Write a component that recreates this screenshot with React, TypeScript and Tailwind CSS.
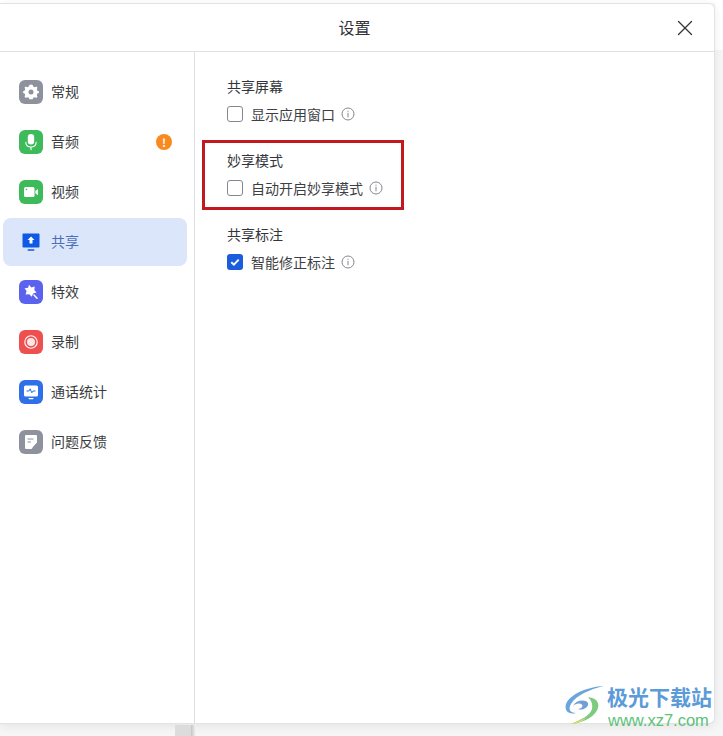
import { X } from "lucide-react"
import type { ReactNode } from "react"

function IconBox({ color, children }: { color: string; children: ReactNode }) {
  return (
    <div className={`w-6 h-6 rounded-md flex items-center justify-center shrink-0 ${color}`}>
      <svg className="w-6 h-6" viewBox="0 0 24 24" fill="none">
        {children}
      </svg>
    </div>
  )
}

const navItems: { label: string; color: string; icon: ReactNode; badge?: boolean; active?: boolean }[] = [
  {
    label: "常规",
    color: "bg-[#8e929c]",
    icon: (
      <>
        <path
          d="M12 5.500l1.600.4.5 1.500 1.500.6 1.400-.7 1.200 1.200-.7 1.400.6 1.500 1.400.6v1.600l-1.400.5-.6 1.500.7 1.400-1.200 1.200-1.400-.7-1.500.6-.5 1.400h-3.200l-.5-1.400-1.500-.6-1.400.7-1.200-1.200.7-1.400-.6-1.500-1.400-.5v-1.600l1.400-.6.6-1.500-.7-1.400 1.200-1.200 1.400.7 1.500-.6.5-1.500z"
          fill="#fff"
          transform="translate(12 12) scale(1.050) translate(-12 -12.600)"
        />
        <circle cx="12" cy="12" r="2.500" fill="#8e929c" />
      </>
    ),
  },
  {
    label: "音频",
    color: "bg-[#3dba5a]",
    badge: true,
    icon: (
      <>
        <rect x="8.800" y="4" width="6.400" height="10.500" rx="3.200" fill="#fff" />
        <path d="M6.800 12.200c.2 3 2.500 4.800 5.200 4.800s5-1.800 5.200-4.800M12 17v2.800" stroke="#fff" strokeWidth="1.100" strokeLinecap="round" />
      </>
    ),
  },
  {
    label: "视频",
    color: "bg-[#3dba5a]",
    icon: (
      <>
        <rect x="5" y="7" width="10.500" height="10" rx="1.500" fill="#fff" />
        <path d="M16.300 11l2.700-2v6.200l-2.700-2z" fill="#fff" />
        <circle cx="7.500" cy="9.500" r=".8" fill="#3dba5a" />
      </>
    ),
  },
  {
    label: "共享",
    color: "",
    active: true,
    icon: (
      <>
        <rect x="3.500" y="3.500" width="17" height="14" rx="1" fill="#0e5ae6" />
        <path d="M12 6.500l3.500 3.500h-2v3.500h-3V10h-2z" fill="#fff" />
        <rect x="8.500" y="19.200" width="7" height="1.500" rx=".7" fill="#0e5ae6" />
      </>
    ),
  },
  {
    label: "特效",
    color: "bg-[#5b62ee]",
    icon: (
      <>
        <path d="M10 4.800l2.300 2.700 3.500-1-.5 3.600 2.200 2.400-3.400 1-1.300 3.300-2.600-2.500-3.600.2 1-3.400-2-2.800 3.500-.5z" fill="#fff" />
        <path d="M15 15l3 3.200" stroke="#fff" strokeWidth="1.500" strokeLinecap="round" />
      </>
    ),
  },
  {
    label: "录制",
    color: "bg-[#ee5050]",
    icon: (
      <>
        <circle cx="12" cy="12" r="6.200" stroke="#fff" strokeWidth="1.100" />
        <circle cx="12" cy="12" r="4" fill="#fff" fillOpacity=".85" />
      </>
    ),
  },
  {
    label: "通话统计",
    color: "bg-[#2f6fe8]",
    icon: (
      <>
        <rect x="5" y="5.500" width="14" height="11" rx="1.500" fill="#fff" />
        <path d="M7.500 11h2.500l1.200-2.200 1.600 4 1.200-1.800h2.500" stroke="#2f6fe8" strokeWidth="1" strokeLinejoin="round" />
        <rect x="9.500" y="18" width="5" height="1.200" rx=".6" fill="#fff" />
      </>
    ),
  },
  {
    label: "问题反馈",
    color: "bg-[#8e929c]",
    icon: (
      <>
        <path d="M7 5h10a1 1 0 011 1v6.500L12.500 19H7a1 1 0 01-1-1V6a1 1 0 011-1z" fill="#fff" />
        <path d="M8.500 9h6M8.500 12h3.500" stroke="#8e929c" strokeWidth="1.200" />
        <path d="M14 17.500l5-5" stroke="#8e929c" strokeWidth="1" />
      </>
    ),
  },
]

function InfoIcon() {
  return (
    <svg className="w-[14px] h-[14px] shrink-0" viewBox="0 0 14 14" fill="none">
      <circle cx="7" cy="7" r="6" stroke="#85888f" strokeWidth="1" />
      <rect x="6.500" y="3.700" width="1" height="1.100" fill="#85888f" />
      <rect x="6.500" y="5.800" width="1" height="4.500" fill="#85888f" />
    </svg>
  )
}

function Option({ title, label, checked }: { title: string; label: string; checked?: boolean }) {
  return (
    <div className="flex flex-col gap-[7px]">
      <div className="h-5 leading-[18px] text-[14px] text-[#33353a]">{title}</div>
      <div className="flex items-center h-5">
        {checked ? (
          <div className="w-4 h-4 rounded-[3px] bg-[#1b5ddc] flex items-center justify-center">
            <svg className="w-3 h-3" viewBox="0 0 12 12" fill="none">
              <path d="M2.300 6.200l2.600 2.500 4.800-5" stroke="#fff" strokeWidth="1.900" />
            </svg>
          </div>
        ) : (
          <div className="w-4 h-4 rounded-[3px] border border-[#85878d] bg-white" />
        )}
        <span className="ml-2 text-[14px] text-[#3d3f45] leading-5 mb-[1px]">{label}</span>
        <span className="ml-[6px] flex">
          <InfoIcon />
        </span>
      </div>
    </div>
  )
}

export default function App() {
  return (
    <div
      className="relative w-[723px] h-[736px] overflow-hidden bg-[#f6f6f7] text-[#2e3035]"
      style={{ fontFamily: '"Noto Sans CJK SC", "Liberation Sans", sans-serif' }}
    >
      <div className="absolute right-0 top-0 w-2 h-[50px] bg-white" />
      <div className="h-[3px] bg-white" />
      {/* settings window */}
      <div className="relative w-[715px] h-[721px] bg-white rounded-br-md rounded-tr-md border-t border-r border-b border-[#e3e3e5] flex flex-col shadow-[0_2px_10px_rgba(0,0,0,0.08)]">
        <div className="relative h-12 shrink-0 flex items-center justify-center border-b border-[#dfdfe1]">
          <span className="text-[16px] ml-[-5px] mb-[1px] text-[#303236]">设置</span>
          <X className="absolute right-[16px] top-[11px] w-[26px] h-[26px] text-[#33353a]" strokeWidth={1.200} />
        </div>

        <div className="flex flex-1 min-h-0">
          {/* sidebar */}
          <div className="w-[195px] shrink-0 border-r border-[#dfdfe1] pt-4 pl-[3px] flex flex-col gap-[2px]">
            {navItems.map((item) => (
              <div
                key={item.label}
                className={`w-[184px] h-12 rounded-lg flex items-center pl-4 pr-[15px] gap-2 ${item.active ? "bg-[#dbe6fb]" : ""}`}
              >
                <IconBox color={item.color}>{item.icon}</IconBox>
                <span className={`text-[14px] leading-5 mb-[2px] ${item.active ? "text-[#4b6fb8]" : "text-[#3a3c41]"}`}>{item.label}</span>
                {item.badge && (
                  <span className="ml-auto w-4 h-4 rounded-full bg-[#f98a1f] text-white text-[11px] font-bold leading-4 text-center">
                    !
                  </span>
                )}
              </div>
            ))}
          </div>

          {/* content */}
          <div className="flex-1 pl-8 pt-[25px] flex flex-col gap-[27px]">
            <Option title="共享屏幕" label="显示应用窗口" />
            <Option title="妙享模式" label="自动开启妙享模式" />
            <Option title="共享标注" label="智能修正标注" checked />
          </div>
        </div>
      </div>

      {/* red highlight box */}
      <div className="absolute left-[202px] top-[140px] w-[202px] h-[70px] border-[3px] border-[#c01920]" />

      {/* scrollbar stub under window */}
      <div className="absolute left-[175px] top-[725px] w-4 h-[11px] bg-[#dcdcdc]" />
      <div className="absolute left-[191px] top-[725px] w-[5px] h-[11px] bg-gradient-to-r from-[#c4c4c4] to-[#f6f6f7]" />

      {/* watermark */}
      <div className="absolute left-[563px] top-[684px] w-[160px] h-[44px]">
        <svg className="absolute left-0 top-0 w-[46px] h-[42px]" viewBox="0 0 46 42" fill="none">
          <path d="M41 2C25 3 8 9 3 20c-2 7 3 11 10 9-6 0-8-4-5-9C13 11 28 5 41 2z" fill="#6aa6dc" />
          <path d="M10 22c3-6 12-7 15-3 1 4-5 8-10 6 4 0 6-4 3-5-3-1-6 0-8 2z" fill="#6f9fd6" />
          <path d="M25 13c10 1 13 8 8 15-5 7-15 11-25 12 9-4 19-8 21-15 1-5-1-9-4-12z" fill="#7ccb7e" />
          <path d="M8 40c5-2 10-4 15-6-4 4-10 6-15 6z" fill="#d7dc6e" />
        </svg>
        <div className="absolute left-[44px] top-[0px] text-[21px] leading-[25px] font-bold text-[#5b9bd8] whitespace-nowrap" style={{ fontFamily: '"Noto Sans CJK SC", sans-serif' }}>
          极光下载站
        </div>
        <div className="absolute left-[45px] top-[27px] text-[16.500px] leading-[18px] text-[#5cc278] whitespace-nowrap" style={{ fontFamily: '"Liberation Sans", sans-serif' }}>
          www.xz7.com
        </div>
      </div>
    </div>
  )
}
